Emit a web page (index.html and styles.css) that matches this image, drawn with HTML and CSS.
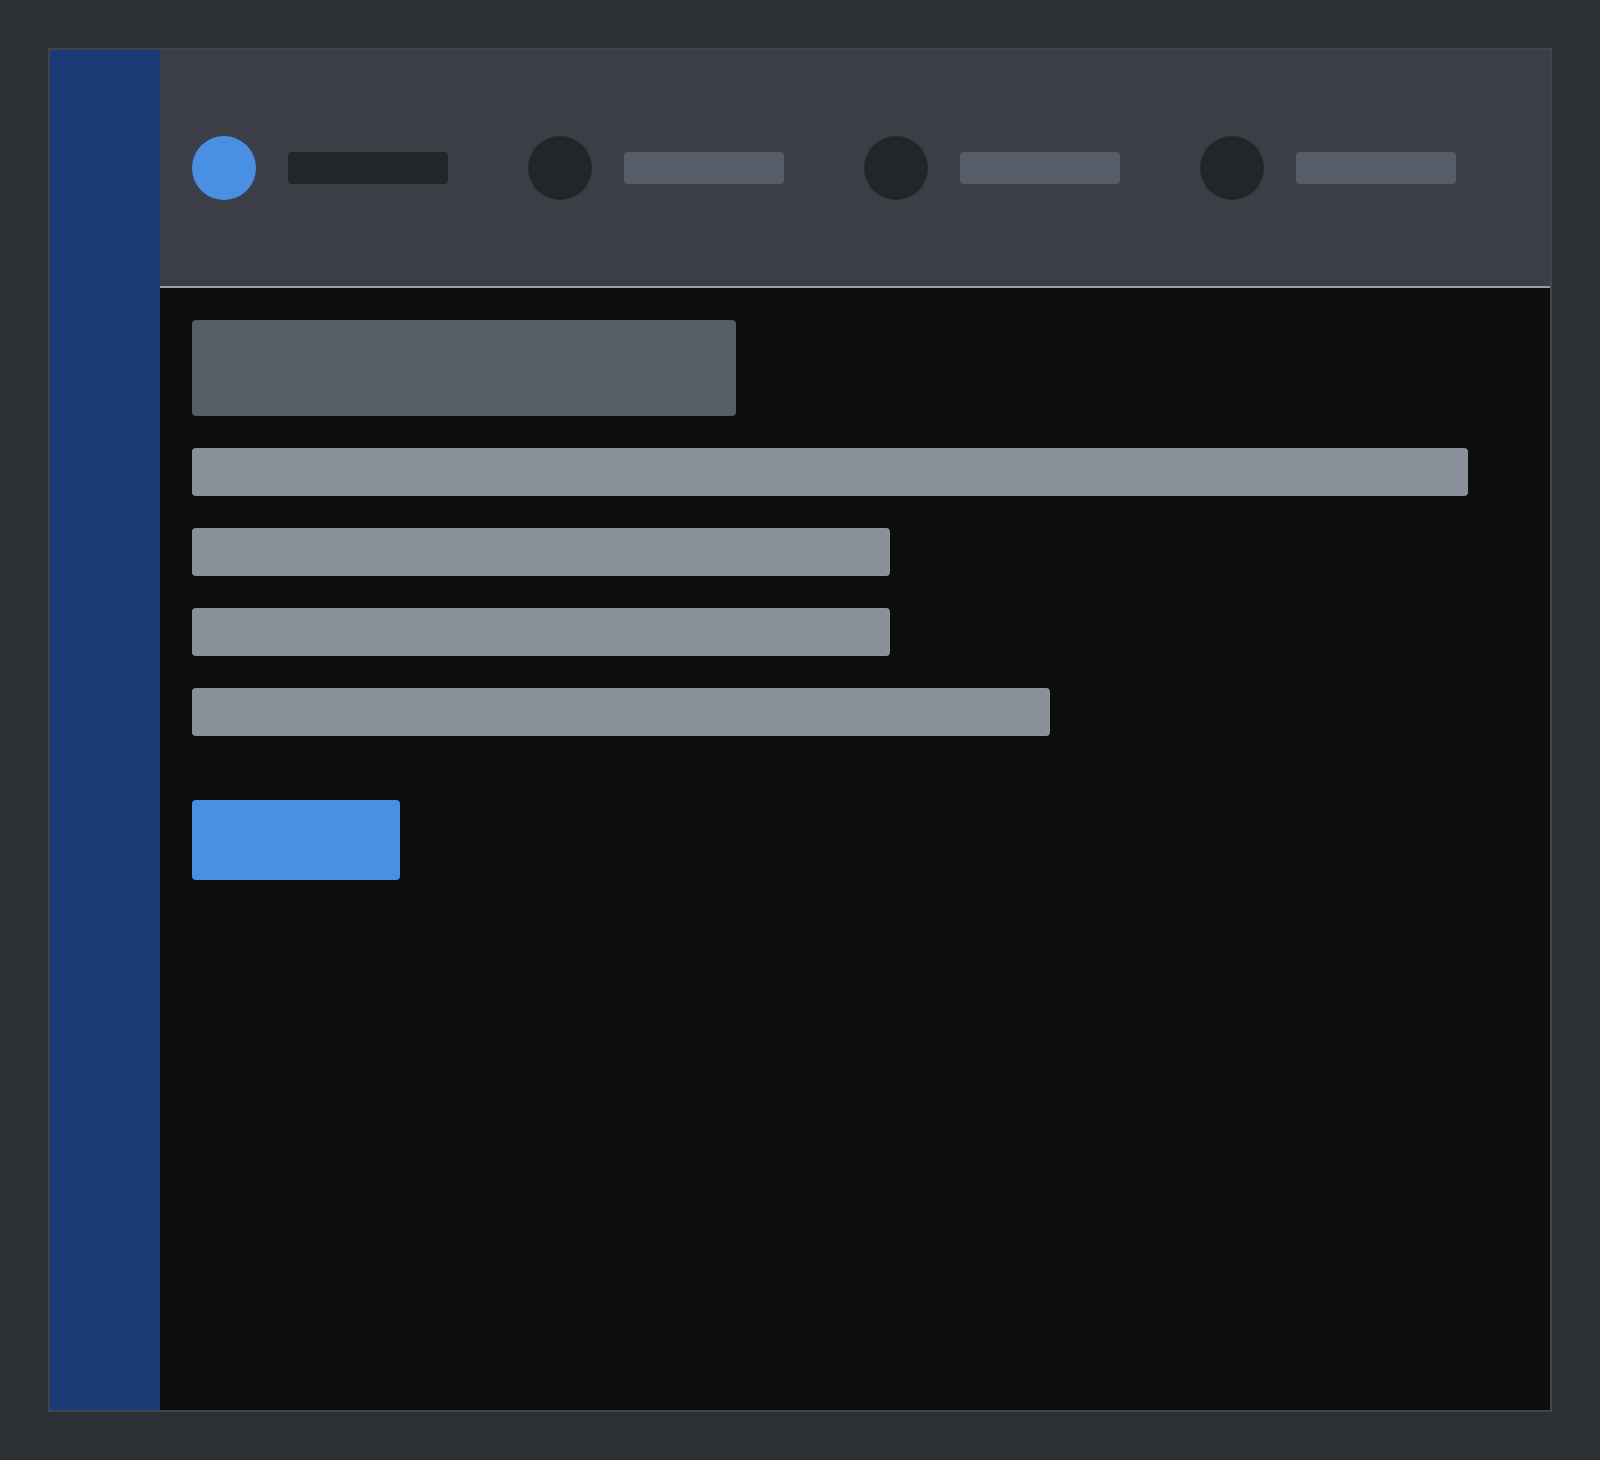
FILE: index.html
```html
<!DOCTYPE html>
<html lang="en">
<head>
  <meta charset="UTF-8">
  <meta name="viewport" content="width=device-width, initial-scale=1.0">
  <title>Wizard Skeleton</title>
  <link rel="stylesheet" href="styles.css">
</head>
<body>
  <div class="frame">
    <div class="sidebar"></div>

    <div class="main">
      <div class="steps">
        <div class="step active">
          <span class="step-dot"></span>
          <span class="step-label"></span>
        </div>
        <div class="step">
          <span class="step-dot"></span>
          <span class="step-label"></span>
        </div>
        <div class="step">
          <span class="step-dot"></span>
          <span class="step-label"></span>
        </div>
        <div class="step">
          <span class="step-dot"></span>
          <span class="step-label"></span>
        </div>
      </div>

      <div class="content">
        <div class="title-block"></div>
        <div class="line line-full"></div>
        <div class="line line-half"></div>
        <div class="line line-half"></div>
        <div class="line line-wide"></div>
        <div class="primary-btn"></div>
      </div>
    </div>
  </div>
</body>
</html>
```

FILE: styles.css
```css
body {
  font-family: "Liberation Sans", Arial, sans-serif;
  background-color: #2c2f34;
  margin: 0;
  padding: 48px;
}

.frame {
  display: flex;
  width: 1500px;
  height: 1360px;
  border: 2px solid #41454c;
}

.sidebar {
  width: 110px;
  flex-shrink: 0;
  background-color: #1c3a75;
}

.main {
  flex: 1;
  display: flex;
  flex-direction: column;
  background-color: #0c0e0e;
}

.steps {
  display: flex;
  align-items: center;
  gap: 80px;
  height: 236px;
  padding: 0 32px;
  background-color: #3c3e47;
  border-bottom: 2px solid #9aa0a8;
}

.step {
  display: flex;
  align-items: center;
  gap: 32px;
}

.step-dot {
  width: 64px;
  height: 64px;
  border-radius: 50%;
  background-color: #232629;
}

.step-label {
  width: 160px;
  height: 32px;
  border-radius: 4px;
  background-color: #575d68;
}

.step.active .step-dot {
  background-color: #4a90e2;
}

.step.active .step-label {
  background-color: #24272a;
}

.content {
  display: flex;
  flex-direction: column;
  align-items: flex-start;
  gap: 32px;
  padding: 32px;
}

.title-block {
  width: 544px;
  height: 96px;
  border-radius: 4px;
  background-color: #575d67;
}

.line {
  height: 48px;
  border-radius: 4px;
  background-color: #8b919a;
}

.line-full {
  width: 1276px;
}

.line-half {
  width: 698px;
}

.line-wide {
  width: 858px;
}

.primary-btn {
  width: 208px;
  height: 80px;
  margin-top: 32px;
  border-radius: 4px;
  background-color: #4a90e2;
}
```
